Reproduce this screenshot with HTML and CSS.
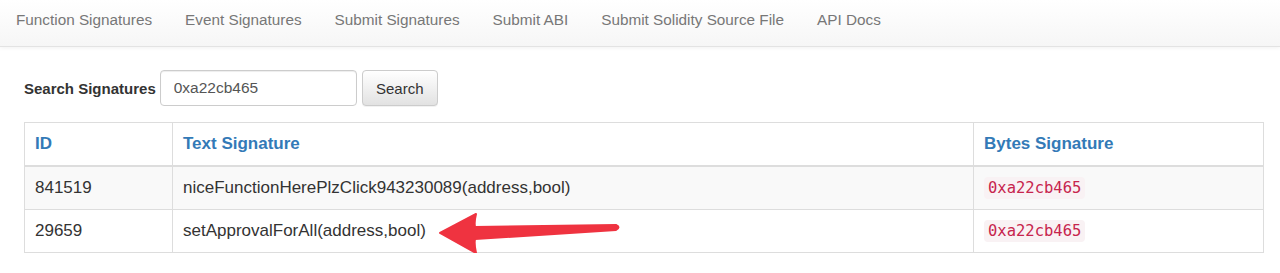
FILE: index.html
```html
<!DOCTYPE html>
<html lang="en">
<head>
    <meta charset="UTF-8">
    <title>Ethereum Signature Database</title>
    <link rel="stylesheet" href="styles.css">
</head>
<body>
    <nav class="navbar">
        <ul class="nav">
            <li><a href="#">Function Signatures</a></li>
            <li><a href="#">Event Signatures</a></li>
            <li><a href="#">Submit Signatures</a></li>
            <li><a href="#">Submit ABI</a></li>
            <li><a href="#">Submit Solidity Source File</a></li>
            <li><a href="#">API Docs</a></li>
        </ul>
    </nav>

    <div class="container">
        <form class="search-form">
            <label for="query">Search Signatures</label>
            <input type="text" id="query" value="0xa22cb465">
            <button type="submit">Search</button>
        </form>

        <div class="results">
            <table class="table">
                <thead>
                    <tr>
                        <th class="col-id">ID</th>
                        <th class="col-text">Text Signature</th>
                        <th>Bytes Signature</th>
                    </tr>
                </thead>
                <tbody>
                    <tr>
                        <td>841519</td>
                        <td>niceFunctionHerePlzClick943230089(address,bool)</td>
                        <td><code>0xa22cb465</code></td>
                    </tr>
                    <tr>
                        <td>29659</td>
                        <td>setApprovalForAll(address,bool)</td>
                        <td><code>0xa22cb465</code></td>
                    </tr>
                </tbody>
            </table>

            <!-- annotation arrow -->
            <svg class="arrow" width="200" height="50" viewBox="0 0 200 50">
                <path d="M10 25 L46 6 Q44 14 45 19 L186 17 Q191 19 186 22 L45 31 Q44 36 46 45 Z" fill="#ef3340" stroke="#ef3340" stroke-width="2" stroke-linejoin="round"/>
            </svg>
        </div>
    </div>
</body>
</html>
```

FILE: styles.css
```css
body {
    margin: 0;
    font-family: "Liberation Sans", Arial, sans-serif;
    font-size: 17px;
    color: #333;
    background-color: #fff;
}

.navbar {
    height: 46px;
    background-image: linear-gradient(to bottom, #fff 0%, #f6f6f6 100%);
    border-bottom: 1px solid #e3e3e3;
    box-shadow: 0 1px 4px rgba(0, 0, 0, 0.06);
}

.nav {
    list-style: none;
    margin: 0;
    padding: 0;
    display: flex;
}

.nav a {
    display: block;
    padding: 10px 17px 0 16px;
    line-height: 19px;
    font-size: 15.3px;
    color: #777;
    text-decoration: none;
}

.container {
    padding: 23px 16px 0 24px;
}

.search-form {
    display: flex;
    align-items: center;
    height: 36px;
}

.search-form label {
    font-size: 15px;
    font-weight: bold;
    margin-right: 4px;
}

.search-form input {
    box-sizing: border-box;
    width: 197px;
    height: 36px;
    padding: 0 13px;
    font-family: inherit;
    font-size: 15.5px;
    color: #555;
    border: 1px solid #ccc;
    border-radius: 4px;
    box-shadow: inset 0 1px 1px rgba(0, 0, 0, 0.075);
}

.search-form button {
    box-sizing: border-box;
    width: 76px;
    height: 36px;
    margin-left: 5px;
    font-family: inherit;
    font-size: 15px;
    color: #333;
    border: 1px solid #ccc;
    border-radius: 4px;
    background-image: linear-gradient(to bottom, #fff 0%, #e2e2e2 100%);
    box-shadow: 0 1px 0 rgba(0, 0, 0, 0.05);
}

.results {
    position: relative;
    margin-top: 16px;
}

.table {
    width: 100%;
    border-collapse: collapse;
    border: 1px solid #ddd;
}

.table th,
.table td {
    border: 1px solid #ddd;
    padding: 10px 10px;
    line-height: 22px;
    text-align: left;
}

.table th {
    color: #337ab7;
    font-weight: bold;
    border-bottom-width: 2px;
}

.col-id {
    width: 127px;
}

.col-text {
    width: 780px;
}

.table tbody tr:nth-child(odd) {
    background-color: #f9f9f9;
}

code {
    font-family: "DejaVu Sans Mono", "Liberation Mono", monospace;
    font-size: 15.5px;
    color: #c7254e;
    background-color: #f9f2f4;
    padding: 2px 4px;
    border-radius: 4px;
}

.arrow {
    position: absolute;
    left: 406px;
    top: 86px;
}
```
